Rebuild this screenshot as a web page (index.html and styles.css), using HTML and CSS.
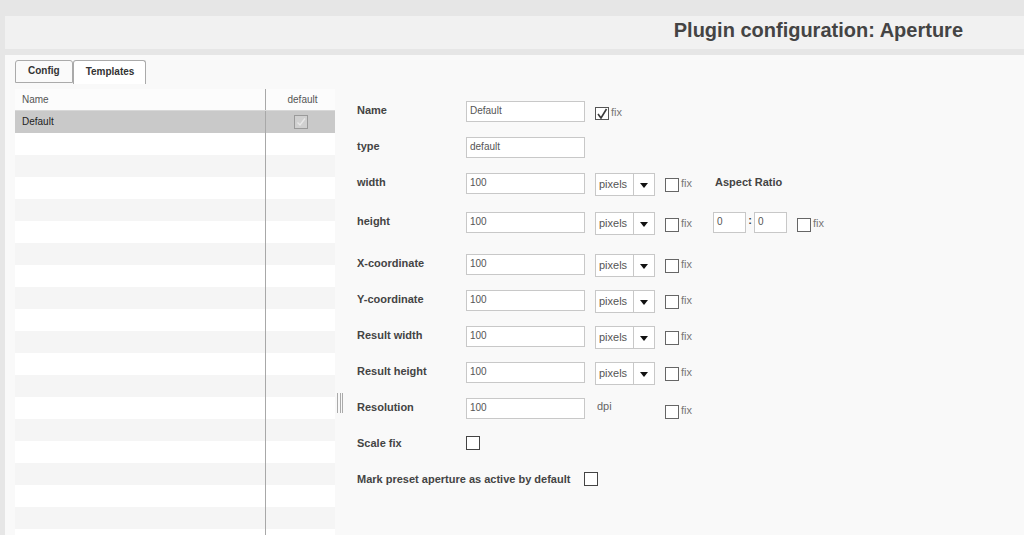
FILE: index.html
```html
<!DOCTYPE html>
<html lang="en">
<head>
<meta charset="utf-8">
<title>Plugin configuration: Aperture</title>
<link rel="stylesheet" href="styles.css">
</head>
<body>
<div class="topbar"></div>
<header class="header"><h1 class="title">Plugin configuration: Aperture</h1></header>
<div class="gapbar"></div>
<main class="main">
  <aside class="left">
    <div class="tabs">
      <span class="tab">Config</span>
      <span class="tab active">Templates</span>
    </div>
    <div class="table">
      <div class="trow thead"><div class="c-name">Name</div><div class="c-def">default</div></div>
      <div class="trow sel"><div class="c-name">Default</div><div class="c-def"><span class="cb-dis"><svg viewBox="0 0 12 12" width="12" height="12"><path d="M2.5 6.5 L5 9 L10 2.5" fill="none" stroke="#e8e8e8" stroke-width="1.4"/></svg></span></div></div>
      <div class="trow"><div class="c-name"></div><div class="c-def"></div></div>
      <div class="trow alt"><div class="c-name"></div><div class="c-def"></div></div>
      <div class="trow"><div class="c-name"></div><div class="c-def"></div></div>
      <div class="trow alt"><div class="c-name"></div><div class="c-def"></div></div>
      <div class="trow"><div class="c-name"></div><div class="c-def"></div></div>
      <div class="trow alt"><div class="c-name"></div><div class="c-def"></div></div>
      <div class="trow"><div class="c-name"></div><div class="c-def"></div></div>
      <div class="trow alt"><div class="c-name"></div><div class="c-def"></div></div>
      <div class="trow"><div class="c-name"></div><div class="c-def"></div></div>
      <div class="trow alt"><div class="c-name"></div><div class="c-def"></div></div>
      <div class="trow"><div class="c-name"></div><div class="c-def"></div></div>
      <div class="trow alt"><div class="c-name"></div><div class="c-def"></div></div>
      <div class="trow"><div class="c-name"></div><div class="c-def"></div></div>
      <div class="trow alt"><div class="c-name"></div><div class="c-def"></div></div>
      <div class="trow"><div class="c-name"></div><div class="c-def"></div></div>
      <div class="trow alt"><div class="c-name"></div><div class="c-def"></div></div>
      <div class="trow"><div class="c-name"></div><div class="c-def"></div></div>
      <div class="trow alt"><div class="c-name"></div><div class="c-def"></div></div>
      <div class="trow"><div class="c-name"></div><div class="c-def"></div></div>
    </div>
  </aside>
  <div class="splitter"><span class="grip"></span></div>
  <form class="form">
    <div class="row">
      <label class="lbl">Name</label>
      <span class="inp">Default</span>
      <span class="fix fix-name"><span class="cb checked"><svg viewBox="0 0 12 12" width="12" height="12"><path d="M2 6 L5 10 L10.5 1" fill="none" stroke="#3a3a3a" stroke-width="1.6"/></svg></span><span class="fixtxt">fix</span></span>
    </div>
    <div class="row">
      <label class="lbl">type</label>
      <span class="inp">default</span>
    </div>
    <div class="row row-w">
      <label class="lbl">width</label>
      <span class="inp">100</span>
      <span class="sel-box"><span class="sel-txt">pixels</span><span class="sel-arr"></span></span>
      <span class="fix"><span class="cb"></span><span class="fixtxt">fix</span></span>
      <span class="aspect">Aspect Ratio</span>
    </div>
    <div class="row row-h">
      <label class="lbl">height</label>
      <span class="inp">100</span>
      <span class="sel-box"><span class="sel-txt">pixels</span><span class="sel-arr"></span></span>
      <span class="fix fix-h"><span class="cb"></span><span class="fixtxt">fix</span></span>
      <span class="ratio"><span class="inp small">0</span><span class="colon">:</span><span class="inp small">0</span></span>
      <span class="fix fix-ratio"><span class="cb"></span><span class="fixtxt">fix</span></span>
    </div>
    <div class="row">
      <label class="lbl">X-coordinate</label>
      <span class="inp">100</span>
      <span class="sel-box"><span class="sel-txt">pixels</span><span class="sel-arr"></span></span>
      <span class="fix"><span class="cb"></span><span class="fixtxt">fix</span></span>
    </div>
    <div class="row">
      <label class="lbl">Y-coordinate</label>
      <span class="inp">100</span>
      <span class="sel-box"><span class="sel-txt">pixels</span><span class="sel-arr"></span></span>
      <span class="fix"><span class="cb"></span><span class="fixtxt">fix</span></span>
    </div>
    <div class="row">
      <label class="lbl">Result width</label>
      <span class="inp">100</span>
      <span class="sel-box"><span class="sel-txt">pixels</span><span class="sel-arr"></span></span>
      <span class="fix"><span class="cb"></span><span class="fixtxt">fix</span></span>
    </div>
    <div class="row">
      <label class="lbl">Result height</label>
      <span class="inp">100</span>
      <span class="sel-box"><span class="sel-txt">pixels</span><span class="sel-arr"></span></span>
      <span class="fix"><span class="cb"></span><span class="fixtxt">fix</span></span>
    </div>
    <div class="row">
      <label class="lbl">Resolution</label>
      <span class="inp">100</span>
      <span class="unit">dpi</span>
      <span class="fix"><span class="cb"></span><span class="fixtxt">fix</span></span>
    </div>
    <div class="row row-center row-scale">
      <label class="lbl">Scale fix</label>
      <span class="cb dark"></span>
    </div>
    <div class="row row-center">
      <label class="lbl lbl-auto">Mark preset aperture as active by default</label>
      <span class="cb dark"></span>
    </div>
  </form>
</main>
</body>
</html>
```

FILE: styles.css
```css
* { box-sizing: border-box; }

html, body {
  margin: 0;
  padding: 0;
  height: 100%;
  overflow: hidden;
}

body {
  background: #e6e6e6;
  font-family: "Liberation Sans", Arial, sans-serif;
  color: #444;
}

.topbar { height: 16px; }

.header {
  height: 33px;
  margin-left: 5px;
  background: #f1f1f1;
  display: flex;
  justify-content: flex-end;
  padding-top: 2px;
  padding-right: 61px;
}

.title {
  margin: 0;
  font-size: 20px;
  line-height: 24px;
  font-weight: bold;
  color: #444;
}

.gapbar { height: 6px; }

.main {
  margin-left: 5px;
  background: #f9f9f9;
  height: 480px;
  display: flex;
  align-items: flex-start;
}

/* left list panel */
.left {
  padding: 5px 0 0 10px;
  width: 330px;
  flex: none;
}

.tabs {
  display: flex;
  height: 24px;
  margin-bottom: 5px;
  align-items: flex-start;
}

.tab {
  display: block;
  height: 23px;
  line-height: 20px;
  padding: 0 12px 0 12px;
  font-size: 10px;
  font-weight: bold;
  color: #333;
  background: #fafafa;
  border: 1px solid #aaa;
  border-radius: 3px 3px 0 0;
}

.tab.active {
  height: 24px;
  background: #fff;
  border-bottom: none;
  margin-left: 0;
  padding: 0 11px 0 12px;
  line-height: 22px;
}

.table {
  width: 320px;
}

.trow {
  display: flex;
  height: 22px;
  background: #fff;
}

.trow.alt { background: #f5f5f5; }
.trow.sel { background: #c9c9c9; }

.thead {
  background: #fcfcfc;
  border-bottom: 1px solid #d8d8d8;
}

.c-name {
  width: 251px;
  border-right: 1px solid #a8a8a8;
  padding-left: 7px;
  font-size: 10px;
  line-height: 21px;
  color: #222;
}

.thead .c-name, .thead .c-def { color: #555; }

.c-def {
  flex: 1;
  font-size: 10px;
  line-height: 21px;
  text-align: center;
  display: flex;
  justify-content: center;
  align-items: center;
}

.thead .c-def { padding-left: 4px; }

.cb-dis {
  width: 14px;
  height: 14px;
  border: 1px solid #9a9a9a;
  background: #d0d0d0;
  display: flex;
  align-items: center;
  justify-content: center;
}

/* splitter */
.splitter {
  width: 12px;
  flex: none;
  padding: 338px 0 0 2px;
}

.grip {
  display: block;
  width: 6px;
  height: 20px;
  border-left: 1px solid #aaa;
  border-right: 1px solid #aaa;
  background: linear-gradient(to right, transparent 2px, #aaa 2px, #aaa 3px, transparent 3px);
}

/* form */
.form {
  padding: 46px 0 0 10px;
  display: flex;
  flex-direction: column;
  gap: 14px;
}

.row {
  display: flex;
  align-items: flex-start;
  height: 22px;
}

.row-w { height: 25px; }
.row-h { height: 28px; }
.row-center { align-items: center; }
.row-scale { margin-top: -2px; }

.lbl {
  width: 109px;
  flex: none;
  font-size: 11px;
  font-weight: bold;
  color: #444;
  line-height: 19px;
}

.lbl-auto { width: auto; margin-right: 14px; }
.row-center .lbl { line-height: 22px; }

.inp {
  width: 119px;
  height: 21px;
  border: 1px solid #c8c8c8;
  background: #fff;
  font-size: 10px;
  color: #555;
  line-height: 17px;
  padding-left: 3px;
  flex: none;
}

.inp.small { width: 33px; }

.sel-box {
  display: flex;
  width: 60px;
  height: 23px;
  margin-left: 10px;
  border: 1px solid #c8c8c8;
  background: #fff;
  flex: none;
}

.sel-txt {
  width: 38px;
  border-right: 1px solid #c8c8c8;
  font-size: 11px;
  color: #555;
  line-height: 21px;
  padding-left: 3px;
}

.sel-arr {
  flex: 1;
  position: relative;
}

.sel-arr::after {
  content: "";
  position: absolute;
  left: 6px;
  top: 9px;
  border-left: 4px solid transparent;
  border-right: 4px solid transparent;
  border-top: 5px solid #111;
}

.fix {
  display: flex;
  align-items: flex-start;
  width: 48px;
  margin-left: 10px;
  margin-top: 5px;
  flex: none;
}

.fix-name { margin-top: 6px; }
.fix-h { margin-top: 6px; }
.fix-ratio { margin-left: 10px; margin-top: 6px; }

.cb {
  width: 14px;
  height: 14px;
  border: 1px solid #666;
  background: #fff;
  flex: none;
  display: flex;
  align-items: center;
  justify-content: center;
}

.cb.checked { width: 14px; height: 13px; border-color: #555; }
.cb.dark { border-color: #444; }

.fixtxt {
  font-size: 11px;
  line-height: 11px;
  color: #777;
  margin-left: 2px;
}

.aspect {
  font-size: 11px;
  font-weight: bold;
  color: #444;
  line-height: 18px;
  margin-left: 2px;
}

.ratio {
  display: flex;
  align-items: flex-start;
}

.colon {
  width: 8px;
  text-align: center;
  font-size: 11px;
  font-weight: bold;
  line-height: 16px;
  color: #444;
}

.unit {
  width: 80px;
  flex: none;
  padding-left: 12px;
  font-size: 11px;
  color: #666;
  line-height: 16px;
}

.unit + .fix { margin-left: 0; margin-top: 7px; }
```
